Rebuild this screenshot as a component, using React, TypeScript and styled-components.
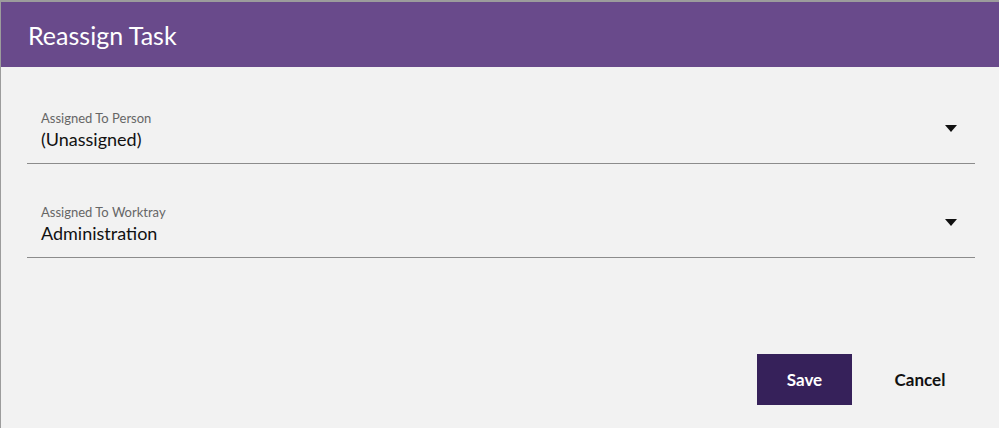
import React from 'react';
import styled, { createGlobalStyle } from 'styled-components';

const GlobalStyle = createGlobalStyle`
  html, body {
    margin: 0;
    padding: 0;
    background: #9c9c9c;
  }
  body {
    font-family: Lato, "Open Sans", sans-serif;
  }
`;

const Backdrop = styled.div`
  width: 999px;
  height: 428px;
  padding: 2px 0 0 1px;
  box-sizing: border-box;
  background: #9c9c9c;
  overflow: hidden;
`;

const Dialog = styled.div`
  display: flex;
  flex-direction: column;
  height: 100%;
  background: #f2f2f2;
`;

const Header = styled.div`
  display: flex;
  align-items: center;
  height: 65px;
  padding: 0 27px;
  background: #694a8b;
  color: #ffffff;
  font-size: 25px;
`;

const Body = styled.div`
  display: flex;
  flex-direction: column;
  gap: 28px;
  padding: 31px 24px 0 26px;
`;

const Field = styled.div`
  display: flex;
  align-items: flex-end;
  justify-content: space-between;
  padding: 0 18px 0 14px;
  height: 66px;
  border-bottom: 1px solid #8c8c8c;
  box-sizing: border-box;
`;

const FieldText = styled.div`
  display: flex;
  flex-direction: column;
  gap: 2px;
  padding-bottom: 13px;
`;

const Label = styled.span`
  font-size: 13px;
  color: #666666;
`;

const Value = styled.span`
  font-size: 18px;
  color: #111111;
`;

const Arrow = styled.svg`
  width: 12px;
  height: 7px;
  margin-bottom: 31px;
`;

const Footer = styled.div`
  display: flex;
  justify-content: flex-end;
  align-items: center;
  gap: 14px;
  margin-top: auto;
  padding: 0 25px 23px 0;
`;

const Button = styled.button<{ $primary?: boolean }>`
  height: 51px;
  width: ${(p) => (p.$primary ? '95px' : '108px')};
  border: none;
  font-family: Lato, "Open Sans", sans-serif;
  font-size: 17px;
  font-weight: 700;
  background: ${(p) => (p.$primary ? '#36215a' : 'transparent')};
  color: ${(p) => (p.$primary ? '#ffffff' : '#111111')};
  cursor: pointer;
`;

function SelectField({ label, value }: { label: string; value: string }) {
  return (
    <Field>
      <FieldText>
        <Label>{label}</Label>
        <Value>{value}</Value>
      </FieldText>
      <Arrow viewBox="0 0 12 7">
        <path d="M0 0 H12 L6 7 Z" fill="#111" />
      </Arrow>
    </Field>
  );
}

export default function App() {
  return (
    <>
      <GlobalStyle />
      <Backdrop>
        <Dialog>
          <Header>Reassign Task</Header>
          <Body>
            <SelectField label="Assigned To Person" value="(Unassigned)" />
            <SelectField label="Assigned To Worktray" value="Administration" />
          </Body>
          <Footer>
            <Button $primary>Save</Button>
            <Button>Cancel</Button>
          </Footer>
        </Dialog>
      </Backdrop>
    </>
  );
}
